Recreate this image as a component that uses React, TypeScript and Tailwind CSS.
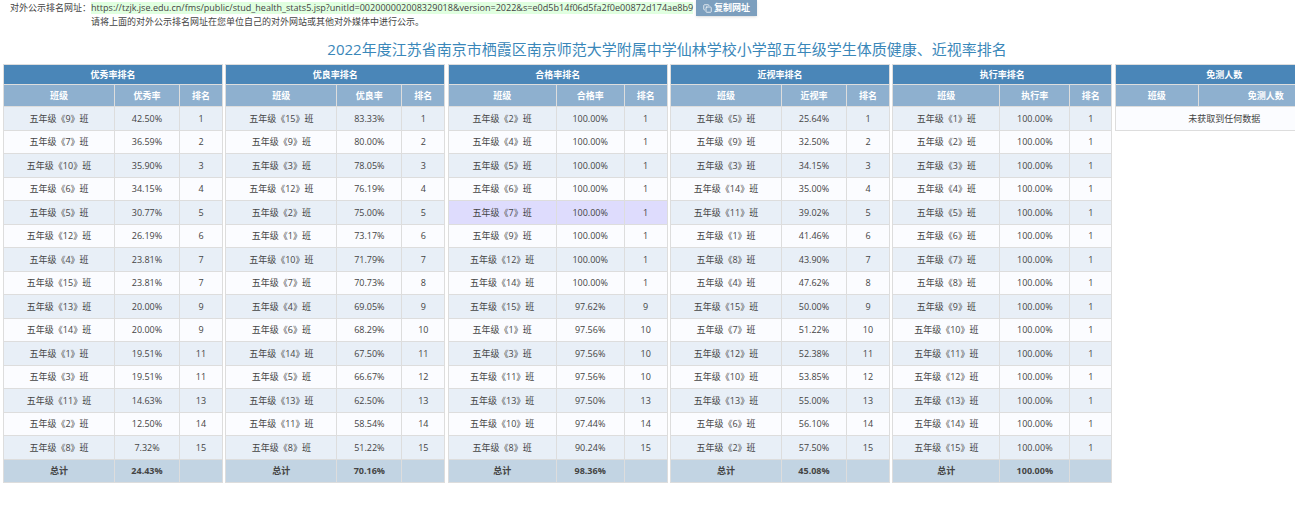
import { Copy } from 'lucide-react';

interface RankTable {
  title: string;
  metric: string;
  cols: string[];
  rows: [number, string, number][];
  total: string;
  highlight?: number;
}

const tables: RankTable[] = [
  {
    title: '优秀率排名',
    metric: '优秀率',
    cols: ['w-[111px]', 'w-[65px]', 'w-[43px]'],
    rows: [
      [9, '42.50%', 1], [7, '36.59%', 2], [10, '35.90%', 3], [6, '34.15%', 4], [5, '30.77%', 5],
      [12, '26.19%', 6], [4, '23.81%', 7], [15, '23.81%', 7], [13, '20.00%', 9], [14, '20.00%', 9],
      [1, '19.51%', 11], [3, '19.51%', 11], [11, '14.63%', 13], [2, '12.50%', 14], [8, '7.32%', 15],
    ],
    total: '24.43%',
  },
  {
    title: '优良率排名',
    metric: '优良率',
    cols: ['w-[111px]', 'w-[65px]', 'w-[43px]'],
    rows: [
      [15, '83.33%', 1], [9, '80.00%', 2], [3, '78.05%', 3], [12, '76.19%', 4], [2, '75.00%', 5],
      [1, '73.17%', 6], [10, '71.79%', 7], [7, '70.73%', 8], [4, '69.05%', 9], [6, '68.29%', 10],
      [14, '67.50%', 11], [5, '66.67%', 12], [13, '62.50%', 13], [11, '58.54%', 14], [8, '51.22%', 15],
    ],
    total: '70.16%',
  },
  {
    title: '合格率排名',
    metric: '合格率',
    cols: ['w-[108px]', 'w-[68px]', 'w-[43px]'],
    rows: [
      [2, '100.00%', 1], [4, '100.00%', 1], [5, '100.00%', 1], [6, '100.00%', 1], [7, '100.00%', 1],
      [9, '100.00%', 1], [12, '100.00%', 1], [14, '100.00%', 1], [15, '97.62%', 9], [1, '97.56%', 10],
      [3, '97.56%', 10], [11, '97.56%', 10], [13, '97.50%', 13], [10, '97.44%', 14], [8, '90.24%', 15],
    ],
    total: '98.36%',
    highlight: 4,
  },
  {
    title: '近视率排名',
    metric: '近视率',
    cols: ['w-[111px]', 'w-[65px]', 'w-[43px]'],
    rows: [
      [5, '25.64%', 1], [9, '32.50%', 2], [3, '34.15%', 3], [14, '35.00%', 4], [11, '39.02%', 5],
      [1, '41.46%', 6], [8, '43.90%', 7], [4, '47.62%', 8], [15, '50.00%', 9], [7, '51.22%', 10],
      [12, '52.38%', 11], [10, '53.85%', 12], [13, '55.00%', 13], [6, '56.10%', 14], [2, '57.50%', 15],
    ],
    total: '45.08%',
  },
  {
    title: '执行率排名',
    metric: '执行率',
    cols: ['w-[107px]', 'w-[70px]', 'w-[42px]'],
    rows: [1, 2, 3, 4, 5, 6, 7, 8, 9, 10, 11, 12, 13, 14, 15].map(
      (n): [number, string, number] => [n, '100.00%', 1],
    ),
    total: '100.00%',
  },
];

const cell = 'border border-[#dddddd] text-center p-0';

function RankingTable({ table }: { table: RankTable }) {
  return (
    <table className="w-[219px] shrink-0 table-fixed border-collapse text-[9px] text-[#444444]">
      <colgroup>
        {table.cols.map((c, i) => (
          <col key={i} className={c} />
        ))}
      </colgroup>
      <thead className="text-white">
        <tr className="h-[20px] bg-[#4a86b8]">
          <th colSpan={3} className={`${cell} font-bold`}>{table.title}</th>
        </tr>
        <tr className="h-[22px] bg-[#8eb0cf]">
          <th className={`${cell} font-bold`}>班级</th>
          <th className={`${cell} font-bold`}>{table.metric}</th>
          <th className={`${cell} font-bold`}>排名</th>
        </tr>
      </thead>
      <tbody>
        {table.rows.map(([cls, rate, rank], i) => (
          <tr
            key={cls}
            className={`h-[23.5px] ${
              table.highlight === i ? 'bg-[#dedcfd]' : i % 2 === 0 ? 'bg-[#e8eff7]' : 'bg-[#fbfcff]'
            }`}
          >
            <td className={cell}>五年级《{cls}》班</td>
            <td className={cell}>{rate}</td>
            <td className={cell}>{rank}</td>
          </tr>
        ))}
        <tr className="h-[23.5px] bg-[#c2d4e3]">
          <td className={`${cell} font-bold`}>总计</td>
          <td className={`${cell} font-bold`}>{table.total}</td>
          <td className={cell}></td>
        </tr>
      </tbody>
    </table>
  );
}

export default function App() {
  return (
    <div className="h-[506px] w-[1295px] overflow-hidden bg-white font-['Open_Sans','Noto_Sans_CJK_SC',sans-serif] text-[9px] text-[#444444]">
      <div className="flex h-[16px] items-start whitespace-nowrap pl-[10px]">
        <span className="mt-[2px] w-[81px] shrink-0 leading-[12px]">对外公示排名网址：</span>
        <span className="mt-[2px] h-[12px] w-[602px] shrink-0 bg-[#e0ffe0] text-[9.07px] leading-[12px]">
          https://tzjk.jse.edu.cn/fms/public/stud_health_stats5.jsp?unitId=002000002008329018&amp;version=2022&amp;s=e0d5b14f06d5fa2f0e00872d174ae8b9
        </span>
        <button className="ml-[3px] flex h-[16px] w-[61px] items-center justify-center gap-[2px] bg-[#7c9fbe] font-bold text-white shadow-sm">
          <Copy size={9} />
          复制网址
        </button>
      </div>
      <div className="h-[12px] pl-[91px] leading-[12px]">
        请将上面的对外公示排名网址在您单位自己的对外网站或其他对外媒体中进行公示。
      </div>
      <h1 className="mt-[11px] h-[23px] pl-[39px] text-center text-[15px] leading-[20px] font-normal text-[#3a87b9]">
        2022年度江苏省南京市栖霞区南京师范大学附属中学仙林学校小学部五年级学生体质健康、近视率排名
      </h1>
      <div className="mt-[2px] flex items-start gap-[2.3px] pl-[3px]">
        {tables.map((t) => (
          <RankingTable key={t.title} table={t} />
        ))}
        <table className="w-[218px] shrink-0 table-fixed border-collapse text-[9px]">
          <colgroup>
            <col className="w-[83px]" />
            <col className="w-[135px]" />
          </colgroup>
          <thead className="text-white">
            <tr className="h-[20px] bg-[#4a86b8]">
              <th colSpan={2} className={`${cell} font-bold`}>免测人数</th>
            </tr>
            <tr className="h-[22px] bg-[#8eb0cf]">
              <th className={`${cell} font-bold`}>班级</th>
              <th className={`${cell} font-bold`}>免测人数</th>
            </tr>
          </thead>
          <tbody>
            <tr className="h-[24px] bg-[#fbfcff]">
              <td colSpan={2} className={cell}>未获取到任何数据</td>
            </tr>
          </tbody>
        </table>
      </div>
    </div>
  );
}
